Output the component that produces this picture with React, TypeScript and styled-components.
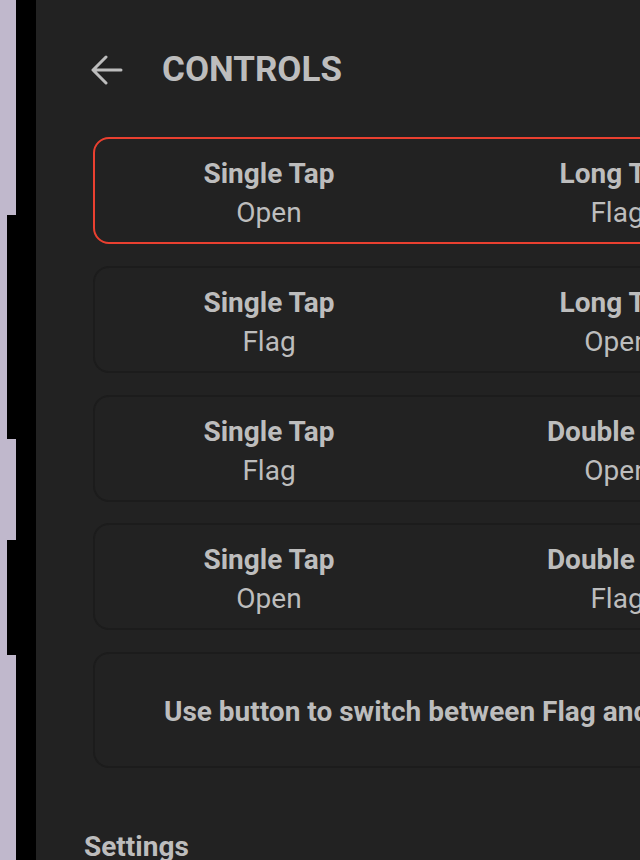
import React from "react";
import styled, { createGlobalStyle } from "styled-components";

interface Mode {
  readonly first: string;
  readonly firstAction: string;
  readonly second: string;
  readonly secondAction: string;
}

const modes: Mode[] = [
  { first: "Single Tap", firstAction: "Open", second: "Long Tap", secondAction: "Flag" },
  { first: "Single Tap", firstAction: "Flag", second: "Long Tap", secondAction: "Open" },
  { first: "Single Tap", firstAction: "Flag", second: "Double Tap", secondAction: "Open" },
  { first: "Single Tap", firstAction: "Open", second: "Double Tap", secondAction: "Flag" }
];

const BackArrow = () => (
  <svg width="32" height="30" viewBox="0 0 32 30" fill="none">
    <path
      d="M30 15H3M15 2L2 15l13 13"
      stroke="#bdbdbd"
      strokeWidth="3"
      strokeLinecap="round"
      strokeLinejoin="round"
    />
  </svg>
);

export default function App() {
  return (
    <>
      <GlobalStyle />
      <Frame>
        <Rail>
          <Bump $top={215} $height={224} />
          <Bump $top={101} $height={115} />
        </Rail>
        <Bezel />
        <Screen>
          <Content>
            <Header>
              <BackArrow />
              <Title>CONTROLS</Title>
            </Header>
            <CardList>
              {modes.map((mode, i) => (
                <Card key={i} $selected={i === 0}>
                  <Column>
                    <Gesture>{mode.first}</Gesture>
                    <Action>{mode.firstAction}</Action>
                  </Column>
                  <Column>
                    <Gesture>{mode.second}</Gesture>
                    <Action>{mode.secondAction}</Action>
                  </Column>
                </Card>
              ))}
              <NoteCard>Use button to switch between Flag and Open</NoteCard>
            </CardList>
            <SectionTitle>Settings</SectionTitle>
          </Content>
        </Screen>
      </Frame>
    </>
  );
}

const GlobalStyle = createGlobalStyle`
  html, body {
    margin: 0;
    padding: 0;
    background: #c0b8cc;
    overflow: hidden;
  }
  body {
    font-family: Roboto, "Liberation Sans", sans-serif;
  }
`;

const Frame = styled.div`
  display: flex;
  height: 860px;
  width: 640px;
  overflow: hidden;
`;

const Rail = styled.div`
  width: 16px;
  flex-shrink: 0;
  display: flex;
  flex-direction: column;
  background: #c0b8cc;
`;

const Bump = styled.div<{ $top: number; $height: number }>`
  margin-top: ${(p) => p.$top}px;
  margin-left: 7px;
  height: ${(p) => p.$height}px;
  width: 9px;
  background: #000;
`;

const Bezel = styled.div`
  width: 20px;
  flex-shrink: 0;
  background: #000;
`;

const Screen = styled.div`
  flex: 1;
  background: #222222;
  overflow: hidden;
`;

const Content = styled.div`
  width: 760px;
  padding: 50px 0 0 48px;
`;

const Header = styled.div`
  display: flex;
  align-items: center;
  gap: 39px;
  height: 40px;
  margin-left: 7px;
`;

const Title = styled.h1`
  margin: 0;
  font-size: 35px;
  line-height: 40px;
  font-weight: 700;
  color: #bdbdbd;
`;

const CardList = styled.div`
  display: flex;
  flex-direction: column;
  gap: 21.75px;
  margin: 47px 0 0 9px;
`;

const Card = styled.div<{ $selected?: boolean }>`
  box-sizing: border-box;
  width: 700px;
  height: 107px;
  padding: 15px 0 10px;
  display: grid;
  grid-template-columns: 1fr 1fr;
  border: 2px solid ${(p) => (p.$selected ? "#ea4030" : "#1c1c1c")};
  border-radius: 16px;
  background: #222222;
`;

const Column = styled.div`
  display: flex;
  flex-direction: column;
  align-items: center;
  font-size: 28px;
  line-height: 39px;
  color: #bdbdbd;
`;

const Gesture = styled.span`
  font-weight: 700;
`;

const Action = styled.span`
  font-weight: 400;
`;

const NoteCard = styled.div`
  box-sizing: border-box;
  width: 700px;
  height: 116px;
  padding-top: 2px;
  display: flex;
  align-items: center;
  justify-content: center;
  border: 2px solid #1c1c1c;
  border-radius: 16px;
  font-size: 28px;
  font-weight: 700;
  color: #bdbdbd;
  white-space: nowrap;
`;

const SectionTitle = styled.h2`
  margin: 63px 0 0;
  font-size: 28px;
  line-height: 32px;
  font-weight: 700;
  color: #bdbdbd;
`;
